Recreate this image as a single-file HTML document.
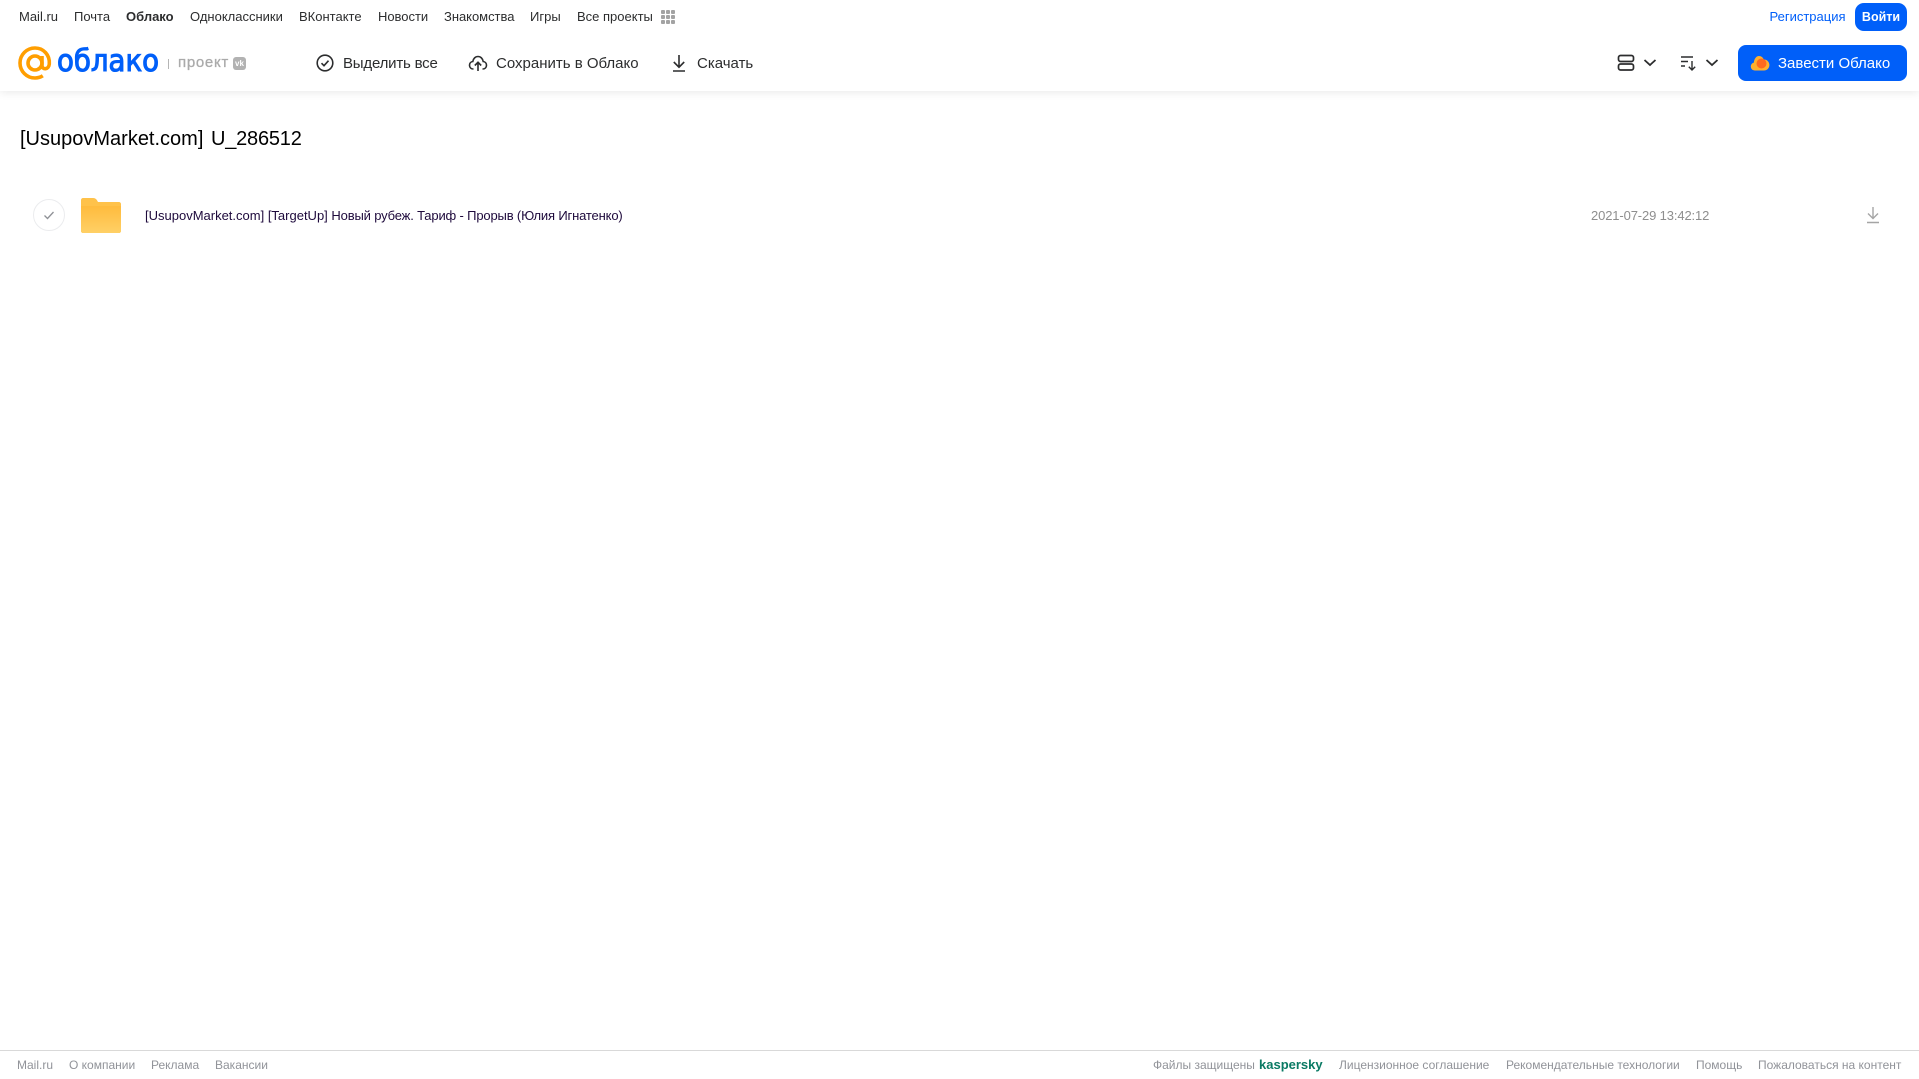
<!DOCTYPE html>
<html lang="ru">
<head>
<meta charset="utf-8">
<title>Облако</title>
<style>
html,body{margin:0;padding:0;background:#fff}
body{position:relative;width:1919px;height:1079px;overflow:hidden;font-family:"Liberation Sans","DejaVu Sans",sans-serif}
.a{position:absolute;white-space:nowrap}
.n{top:8px;line-height:18px;font-size:13px;color:#2c2d2e}
.t{top:53px;line-height:22px;font-size:15px;color:#2c2d2e}
.f{top:1057px;line-height:16px;font-size:12px;color:#919399}
svg{position:absolute;display:block}
</style>
</head>
<body>
<div class="a" style="left:0;top:0;width:1919px;height:91px;background:#fff;box-shadow:0 2px 8px rgba(0,0,0,.08)"></div>

<span class="a n" style="left:19px">Mail.ru</span>
<span class="a n" style="left:74px">Почта</span>
<span class="a n" style="left:126px;font-weight:bold">Облако</span>
<span class="a n" style="left:190px">Одноклассники</span>
<span class="a n" style="left:299px">ВКонтакте</span>
<span class="a n" style="left:378px;letter-spacing:-.03px">Новости</span>
<span class="a n" style="left:444px;letter-spacing:-.03px">Знакомства</span>
<span class="a n" style="left:530px">Игры</span>
<span class="a n" style="left:577px">Все проекты</span>
<svg style="left:660px;top:9px" width="16" height="16" viewBox="0 0 16 16" fill="#a3a3a3">
<rect x="1" y="1" width="4" height="4" rx="1"/><rect x="6" y="1" width="4" height="4" rx="1"/><rect x="11" y="1" width="4" height="4" rx="1"/>
<rect x="1" y="6" width="4" height="4" rx="1"/><rect x="6" y="6" width="4" height="4" rx="1"/><rect x="11" y="6" width="4" height="4" rx="1"/>
<rect x="1" y="11" width="4" height="4" rx="1"/><rect x="6" y="11" width="4" height="4" rx="1"/><rect x="11" y="11" width="4" height="4" rx="1"/>
</svg>

<span class="a n" style="left:1769.5px;color:#005ff9">Регистрация</span>
<div class="a" style="left:1855px;top:3px;width:52px;height:28px;background:#005ff9;border-radius:9px;color:#fff;font-size:12.500px;line-height:28px;text-align:center;font-weight:bold">Войти</div>

<!-- logo -->
<svg style="left:18px;top:46px" width="34" height="34" viewBox="0 0 34 34" fill="none" stroke="#ff9e00" stroke-width="3.6">
<circle cx="17" cy="17" r="7"/>
<path d="M24 10v9.500c0 4.500 6.800 4.500 7.300-1.500C32 9 25.500 2 17 2 8.700 2 2 8.700 2 17s6.700 15 15 15c3 0 5.500-.7 7.800-2.200"/>
</svg>
<span class="a" style="left:57px;top:43px;line-height:38px;font-size:30px;color:#005ff9;-webkit-text-stroke:1.100px #005ff9;font-family:'DejaVu Sans',sans-serif;transform-origin:0 50%;transform:scaleX(.92)">облако</span>
<div class="a" style="left:168px;top:59px;width:1px;height:10px;background:#b5b5b5"></div>
<span class="a" style="left:178px;top:52px;line-height:22px;font-size:15px;letter-spacing:.7px;-webkit-text-stroke:.3px #aaa;color:#aaa">проект</span>
<div class="a" style="left:233px;top:57px;width:13px;height:13px;border-radius:3px;background:#b2b2b2;color:#fff;font-size:8px;line-height:13px;text-align:center;font-weight:bold">vk</div>

<!-- toolbar -->
<svg style="left:315px;top:53px" width="20" height="20" viewBox="0 0 20 20" fill="none" stroke="#2c2d2e" stroke-width="1.600">
<circle cx="10" cy="10" r="7.800"/><path d="M6.500 10.200l2.500 2.500 4.500-5"/>
</svg>
<span class="a t" style="left:343px;letter-spacing:-.2px">Выделить все</span>
<svg style="left:468px;top:53px" width="20" height="20" viewBox="0 0 20 20" fill="none" stroke="#2c2d2e" stroke-width="1.600">
<path d="M5.500 16C3 16 1.500 14.300 1.500 12.200c0-2 1.500-3.500 3.300-3.700C5.300 5.500 7.400 3.500 10 3.500s4.700 2 5.200 5c1.800.2 3.300 1.700 3.300 3.700 0 2.100-1.500 3.800-4 3.800"/>
<path d="M10 18V9.500M6.800 12.500L10 9.300l3.200 3.200"/>
</svg>
<span class="a t" style="left:496px">Сохранить в Облако</span>
<svg style="left:669px;top:53px" width="20" height="20" viewBox="0 0 20 20" fill="none" stroke="#2c2d2e" stroke-width="1.600">
<path d="M10 2v12M4.800 9l5.200 5.200L15.200 9M4 18h12"/>
</svg>
<span class="a t" style="left:697px">Скачать</span>

<!-- right tools -->
<svg style="left:1617px;top:54px" width="18" height="18" viewBox="0 0 18 18" fill="none" stroke="#2c2d2e" stroke-width="1.700">
<rect x="1.500" y="1.500" width="15" height="6" rx="2"/><rect x="1.500" y="10" width="15" height="6" rx="2"/>
</svg>
<svg style="left:1643px;top:58px" width="14" height="10" viewBox="0 0 14 10" fill="none" stroke="#2c2d2e" stroke-width="1.800"><path d="M1.500 2l5.500 5 5.500-5"/></svg>
<svg style="left:1680px;top:54px" width="18" height="18" viewBox="0 0 18 18" fill="none" stroke="#2c2d2e" stroke-width="1.400">
<path d="M1 3h12M1 7.500h7M1 12h4M12 7v9M8.800 12.800l3.200 3.200 3.200-3.200"/>
</svg>
<svg style="left:1705px;top:58px" width="14" height="10" viewBox="0 0 14 10" fill="none" stroke="#2c2d2e" stroke-width="1.800"><path d="M1.500 2l5.500 5 5.500-5"/></svg>

<div class="a" style="left:1738px;top:45px;width:169px;height:36px;background:#005ff9;border-radius:8px"></div>
<svg style="left:1750px;top:54px" width="20" height="18" viewBox="0 0 20 18">
<path d="M5 16.500C2.500 16.500.8 14.700.8 12.500c0-2 1.300-3.500 3-3.900C4.300 5 6 2 9 2c2.300 0 4 1.500 4.700 3.500 3-.2 5.700 2.300 5.700 5.500s-2.500 5.500-5.400 5.500z" fill="#ffb02e"/>
<circle cx="11.500" cy="9.500" r="5" fill="#ff6a1f"/>
</svg>
<span class="a" style="left:1778px;top:53px;line-height:22px;font-size:15px;color:#fff">Завести Облако</span>

<!-- title -->
<div class="a" style="left:20px;top:125.500px;line-height:26px;font-size:20px;color:#000;word-spacing:2px">[UsupovMarket.com] <span style="letter-spacing:-.2px">U_286512</span></div>

<!-- row -->
<div class="a" style="left:33px;top:199px;width:30px;height:30px;border:1px solid #ebecee;border-radius:50%"></div>
<svg style="left:42px;top:208px" width="14" height="14" viewBox="0 0 14 14" fill="none" stroke="#8f9196" stroke-width="1.300"><path d="M2.500 7.500l3 3 6-6.500"/></svg>
<svg style="left:81px;top:197px" width="40" height="36" viewBox="0 0 40 36">
<defs><linearGradient id="g" x1="0" y1="0" x2="0" y2="1"><stop offset="0" stop-color="#ffbb3d"/><stop offset="1" stop-color="#ffd066"/></linearGradient></defs>
<path d="M2 1h10c2 0 3 .8 4 2.200L17 5h21c1.100 0 2 .9 2 2v27c0 1.100-.9 2-2 2H2c-1.100 0-2-.9-2-2V3c0-1.100.9-2 2-2z" fill="#ffc24a"/>
<path d="M0 9h40v25c0 1.100-.9 2-2 2H2c-1.100 0-2-.9-2-2z" fill="url(#g)"/>
</svg>
<span class="a" style="left:145px;top:207px;line-height:18px;font-size:13px;color:#1e0a3c">[UsupovMarket.com] [TargetUp] <span style="letter-spacing:-.16px">Новый рубеж. Тариф - Прорыв (Юлия Игнатенко)</span></span>
<span class="a" style="left:1591px;top:207px;line-height:18px;font-size:13px;letter-spacing:-.13px;color:#8e8e8e">2021-07-29 13:42:12</span>
<svg style="left:1865px;top:206px" width="16" height="18" viewBox="0 0 16 18" fill="none" stroke="#a5a5a5" stroke-width="1.400">
<path d="M8 1v11M3 7.500l5 5 5-5M2 16.500h12"/>
</svg>

<!-- footer -->
<div class="a" style="left:0;top:1050px;width:1919px;height:1px;background:#d9d9d9"></div>
<span class="a f" style="left:17px">Mail.ru</span>
<span class="a f" style="left:69px">О компании</span>
<span class="a f" style="left:151px">Реклама</span>
<span class="a f" style="left:215px">Вакансии</span>
<span class="a f" style="left:1153px">Файлы защищены</span>
<span class="a f" style="left:1259px;color:#0a7a64;font-size:13px;font-weight:bold">kaspersky</span>
<span class="a f" style="left:1339px">Лицензионное соглашение</span>
<span class="a f" style="left:1506px">Рекомендательные технологии</span>
<span class="a f" style="left:1696px">Помощь</span>
<span class="a f" style="left:1758px">Пожаловаться на контент</span>
</body>
</html>
